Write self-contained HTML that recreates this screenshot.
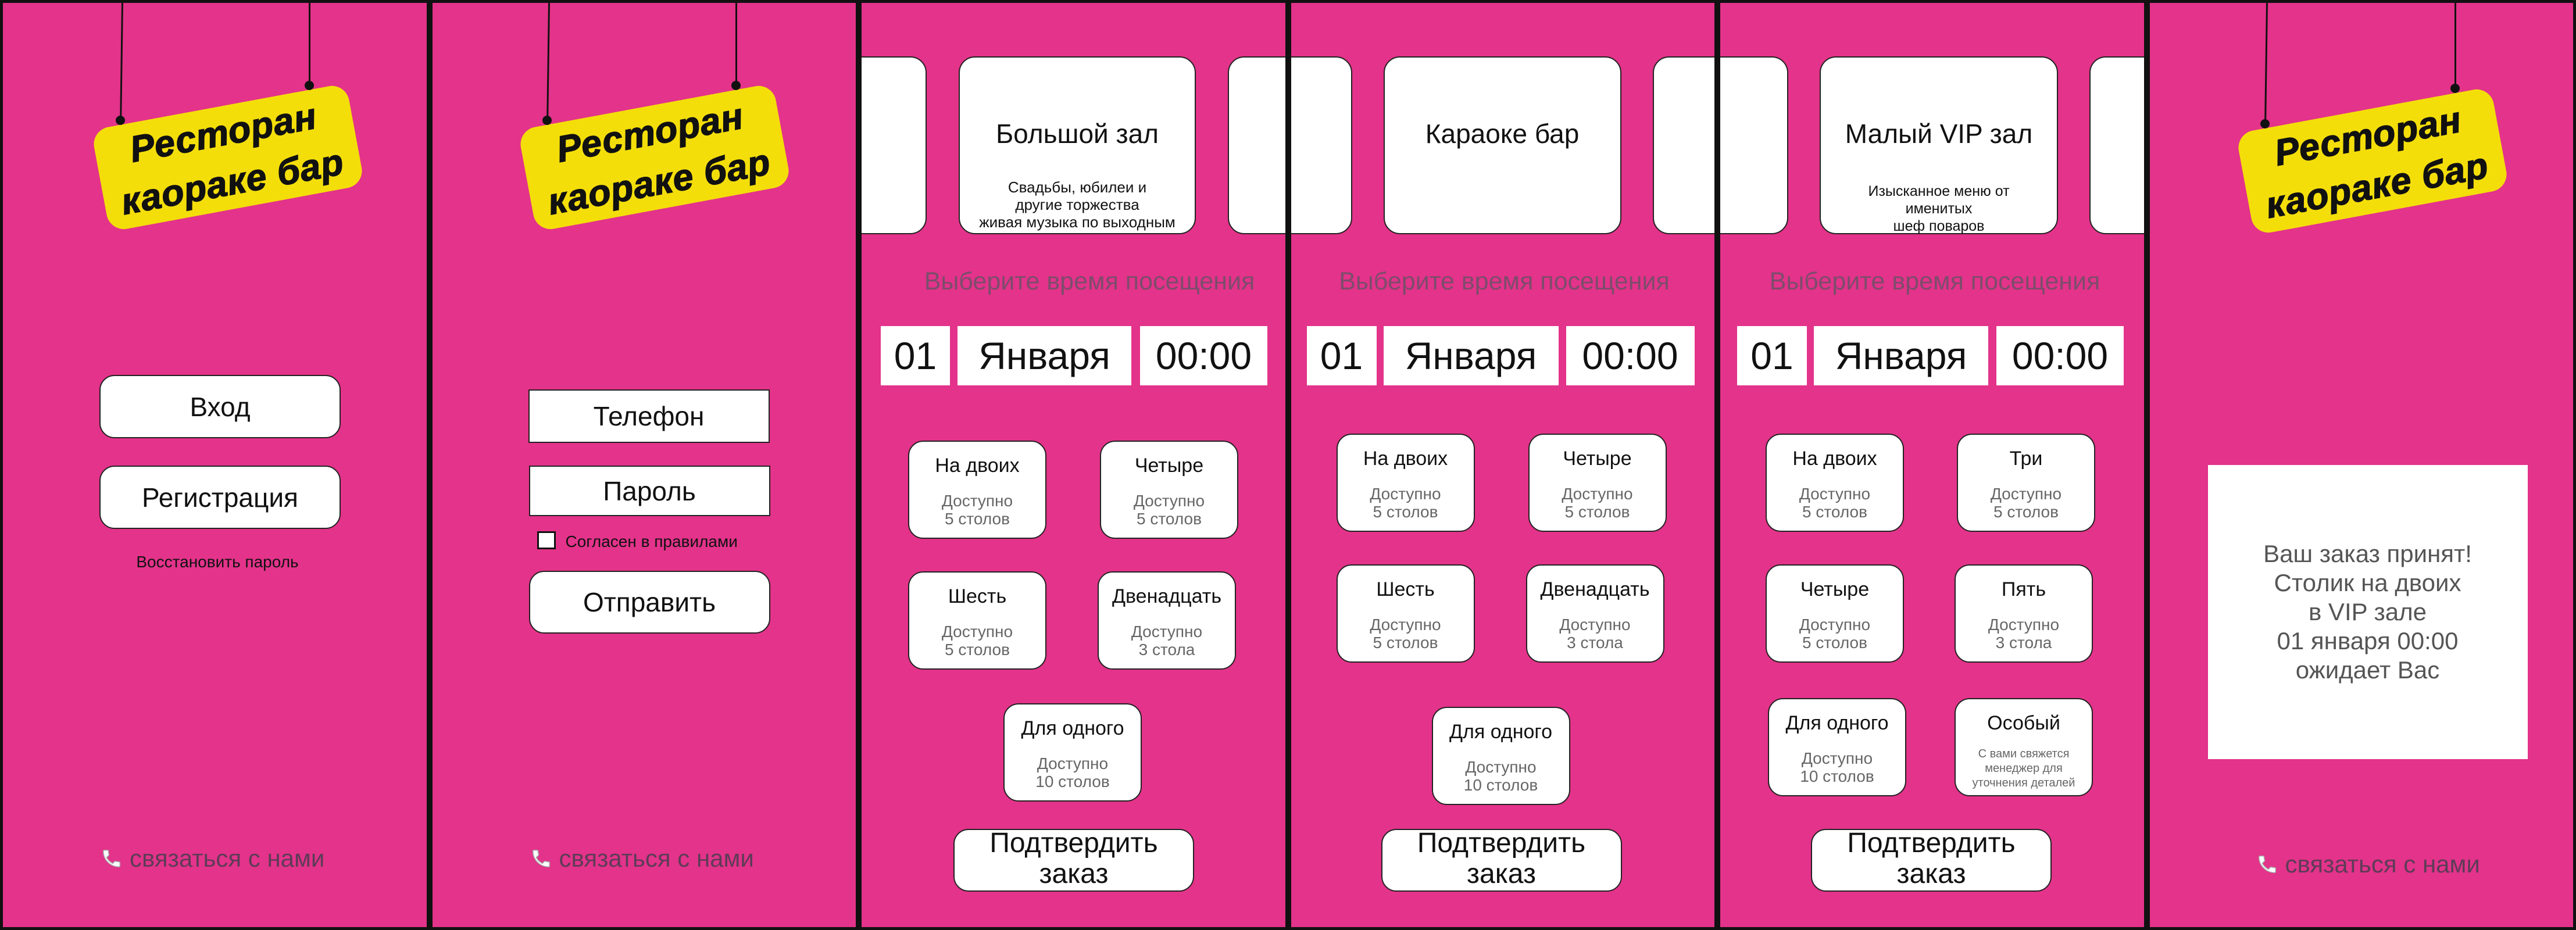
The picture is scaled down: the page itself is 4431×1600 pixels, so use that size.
<!DOCTYPE html>
<html><head><meta charset="utf-8">
<style>
*{margin:0;padding:0;box-sizing:border-box}
html,body{width:4431px;height:1600px;overflow:hidden;background:#000}
body{position:relative;font-family:"Liberation Sans","DejaVu Sans",sans-serif}
.p{position:absolute;top:0;height:1600px;width:738.5px;background:#E3338A;border:5px solid #111;overflow:hidden}
.a{position:absolute}
.btn{position:absolute;background:#fff;border:2.5px solid #222;border-radius:26px;display:flex;align-items:center;justify-content:center;font-size:46px;color:#111;text-align:center}
.inp{position:absolute;background:#fff;border:2.5px solid #222;display:flex;align-items:center;justify-content:center;font-size:46px;color:#111}
.str{position:absolute;width:3px;background:#111;transform-origin:top center}
.dot{position:absolute;width:16px;height:16px;border-radius:50%;background:#111}
.sign{position:absolute;width:446px;height:178px;background:#F4DE0A;border-radius:30px;transform:rotate(-10.5deg);display:flex;flex-direction:column;align-items:center;justify-content:center;font-weight:bold;font-style:italic;font-size:63px;line-height:86px;color:#111;letter-spacing:1px;-webkit-text-stroke:1.5px #111}
.contact{position:absolute;font-size:42px;color:#5f3b58;display:flex;align-items:center}
.hall{position:absolute;top:92px;height:306px;background:#fff;border:2.5px solid #222;border-radius:28px}
.hall .t{position:absolute;left:0;right:0;top:104px;text-align:center;font-size:46px;color:#111}
.hall .s{position:absolute;left:0;right:0;top:208px;text-align:center;font-size:26px;line-height:30px;color:#111}
.choose{position:absolute;top:455px;width:700px;text-align:center;font-size:43px;color:#7d4c6c}
.date{position:absolute;top:556px;height:102px;background:#fff;display:flex;align-items:center;justify-content:center;font-size:66px;color:#111}
.tb{position:absolute;background:#fff;border:2.5px solid #222;border-radius:26px;width:238px;height:169px;text-align:center}
.tb .t{position:absolute;left:0;right:0;top:22px;font-size:34px;color:#111;white-space:nowrap}
.tb .s{position:absolute;left:0;right:0;top:86px;font-size:28px;line-height:31px;color:#666}
.tb .s2{position:absolute;left:0;right:0;top:82px;font-size:20px;line-height:25px;color:#666}
.conf{position:absolute;top:1421px;height:108px;width:414px;background:#fff;border:2.5px solid #222;border-radius:26px;text-align:center;font-size:48px;line-height:53px;color:#111;overflow:visible}
.conf span{position:absolute;left:0;right:0;top:-4px}
</style></head><body>

<!-- Panel 1 -->
<div class="p" style="left:0">
  <div class="str" style="left:204px;top:0;height:201px;transform:rotate(0.8deg)"></div>
  <div class="str" style="left:526px;top:0;height:142px"></div>
  <div class="sign" style="left:164px;top:177px"><div>Ресторан</div><div>каораке бар</div></div>
  <div class="dot" style="left:194px;top:194px"></div>
  <div class="dot" style="left:519px;top:134px"></div>
  <div class="btn" style="left:166px;top:640px;width:415px;height:109px">Вход</div>
  <div class="btn" style="left:166px;top:796px;width:415px;height:109px">Регистрация</div>
  <div class="a" style="left:0;width:738px;top:946px;text-align:center;font-size:28px;color:#111">Восстановить пароль</div>
  <div class="contact" style="left:168px;top:1448px">
    <svg width="38" height="38" viewBox="0 0 24 24"><path d="M6.6 10.8c1.4 2.8 3.8 5.1 6.6 6.6l2.2-2.2c.3-.3.7-.4 1-.2 1.1.4 2.300.6 3.6.6.6 0 1 .4 1 1V20c0 .6-.4 1-1 1C10.6 21 3 13.4 3 4c0-.6.4-1 1-1h3.5c.6 0 1 .4 1 1 0 1.3.2 2.5.6 3.6.1.3 0 .7-.2 1z" fill="#fff" stroke="#aaa" stroke-width="1"/></svg>
    <span style="margin-left:12px">связаться с нами</span></div>
</div>

<!-- Panel 2 -->
<div class="p" style="left:738.5px">
  <div class="str" style="left:199px;top:0;height:201px;transform:rotate(0.8deg)"></div>
  <div class="str" style="left:521px;top:0;height:142px"></div>
  <div class="sign" style="left:159px;top:177px"><div>Ресторан</div><div>каораке бар</div></div>
  <div class="dot" style="left:189px;top:194px"></div>
  <div class="dot" style="left:514px;top:134px"></div>
  <div class="inp" style="left:165px;top:665px;width:415px;height:92px">Телефон</div>
  <div class="inp" style="left:166px;top:796px;width:415px;height:87px">Пароль</div>
  <div class="a" style="left:180px;top:909px;width:32px;height:31px;background:#fff;border:3px solid #111"></div>
  <div class="a" style="left:229px;top:911px;font-size:28px;color:#111">Согласен в правилами</div>
  <div class="btn" style="left:166px;top:977px;width:415px;height:108px">Отправить</div>
  <div class="contact" style="left:168px;top:1448px">
    <svg width="38" height="38" viewBox="0 0 24 24"><path d="M6.6 10.8c1.4 2.8 3.8 5.1 6.6 6.6l2.2-2.2c.3-.3.7-.4 1-.2 1.1.4 2.3.6 3.6.6.6 0 1 .4 1 1V20c0 .6-.4 1-1 1C10.6 21 3 13.4 3 4c0-.6.4-1 1-1h3.5c.6 0 1 .4 1 1 0 1.3.2 2.5.6 3.6.1.3 0 .7-.2 1z" fill="#fff" stroke="#aaa" stroke-width="1"/></svg>
    <span style="margin-left:12px">связаться с нами</span></div>
</div>

<!-- Panel 3 -->
<div class="p" style="left:1477px">
  <div class="hall" style="left:-30px;width:142px"></div>
  <div class="hall" style="left:167px;width:408px"><div class="t">Большой зал</div><div class="s">Свадьбы, юбилеи и<br>другие торжества<br>живая музыка по выходным</div></div>
  <div class="hall" style="left:630px;width:200px"></div>
  <div class="choose" style="left:42px">Выберите время посещения</div>
  <div class="date" style="left:33px;width:119px">01</div>
  <div class="date" style="left:165px;width:299px">Января</div>
  <div class="date" style="left:479px;width:219px">00:00</div>
  <div class="tb" style="left:80px;top:753px"><div class="t">На двоих</div><div class="s">Доступно<br>5 столов</div></div>
  <div class="tb" style="left:410px;top:753px"><div class="t">Четыре</div><div class="s">Доступно<br>5 столов</div></div>
  <div class="tb" style="left:80px;top:978px"><div class="t">Шесть</div><div class="s">Доступно<br>5 столов</div></div>
  <div class="tb" style="left:406px;top:978px"><div class="t">Двенадцать</div><div class="s">Доступно<br>3 стола</div></div>
  <div class="tb" style="left:244px;top:1205px"><div class="t">Для одного</div><div class="s">Доступно<br>10 столов</div></div>
  <div class="conf" style="left:158px"><span>Подтвердить<br>заказ</span></div>
</div>

<!-- Panel 4 -->
<div class="p" style="left:2215.5px">
  <div class="hall" style="left:-30px;width:135px"></div>
  <div class="hall" style="left:159px;width:409px"><div class="t">Караоке бар</div></div>
  <div class="hall" style="left:622px;width:200px"></div>
  <div class="choose" style="left:17px">Выберите время посещения</div>
  <div class="date" style="left:27px;width:120px">01</div>
  <div class="date" style="left:159px;width:301px">Января</div>
  <div class="date" style="left:473px;width:221px">00:00</div>
  <div class="tb" style="left:78px;top:741px"><div class="t">На двоих</div><div class="s">Доступно<br>5 столов</div></div>
  <div class="tb" style="left:408px;top:741px"><div class="t">Четыре</div><div class="s">Доступно<br>5 столов</div></div>
  <div class="tb" style="left:78px;top:966px"><div class="t">Шесть</div><div class="s">Доступно<br>5 столов</div></div>
  <div class="tb" style="left:404px;top:966px"><div class="t">Двенадцать</div><div class="s">Доступно<br>3 стола</div></div>
  <div class="tb" style="left:242px;top:1211px"><div class="t">Для одного</div><div class="s">Доступно<br>10 столов</div></div>
  <div class="conf" style="left:155px"><span>Подтвердить<br>заказ</span></div>
</div>

<!-- Panel 5 -->
<div class="p" style="left:2954px">
  <div class="hall" style="left:-30px;width:147px"></div>
  <div class="hall" style="left:171px;width:410px"><div class="t">Малый VIP зал</div><div class="s" style="top:215px;font-size:25px">Изысканное меню от<br>именитых<br>шеф поваров</div></div>
  <div class="hall" style="left:635px;width:200px"></div>
  <div class="choose" style="left:19px">Выберите время посещения</div>
  <div class="date" style="left:29px;width:120px">01</div>
  <div class="date" style="left:161px;width:300px">Января</div>
  <div class="date" style="left:475px;width:219px">00:00</div>
  <div class="tb" style="left:78px;top:741px"><div class="t">На двоих</div><div class="s">Доступно<br>5 столов</div></div>
  <div class="tb" style="left:407px;top:741px"><div class="t">Три</div><div class="s">Доступно<br>5 столов</div></div>
  <div class="tb" style="left:78px;top:966px"><div class="t">Четыре</div><div class="s">Доступно<br>5 столов</div></div>
  <div class="tb" style="left:403px;top:966px"><div class="t">Пять</div><div class="s">Доступно<br>3 стола</div></div>
  <div class="tb" style="left:82px;top:1196px"><div class="t">Для одного</div><div class="s">Доступно<br>10 столов</div></div>
  <div class="tb" style="left:403px;top:1196px"><div class="t">Особый</div><div class="s2">С вами свяжется<br>менеджер для<br>уточнения деталей</div></div>
  <div class="conf" style="left:156px"><span>Подтвердить<br>заказ</span></div>
</div>

<!-- Panel 6 -->
<div class="p" style="left:3692.5px">
  <div class="str" style="left:200px;top:0;height:207px;transform:rotate(0.8deg)"></div>
  <div class="str" style="left:524px;top:0;height:147px"></div>
  <div class="sign" style="left:160px;top:183px"><div>Ресторан</div><div>каораке бар</div></div>
  <div class="dot" style="left:190px;top:200px"></div>
  <div class="dot" style="left:517px;top:139px"></div>
  <div class="a" style="left:100px;top:795px;width:550px;height:506px;background:#fff;display:flex;align-items:center;justify-content:center;text-align:center;font-size:42px;line-height:50px;color:#555">
    <div>Ваш заказ принят!<br>Столик на двоих<br>в VIP зале<br>01 января 00:00<br>ожидает Вас</div></div>
  <div class="contact" style="left:183px;top:1458px">
    <svg width="38" height="38" viewBox="0 0 24 24"><path d="M6.6 10.8c1.4 2.8 3.8 5.1 6.6 6.6l2.2-2.2c.3-.3.7-.4 1-.2 1.1.4 2.3.6 3.6.6.6 0 1 .4 1 1V20c0 .6-.4 1-1 1C10.6 21 3 13.4 3 4c0-.6.4-1 1-1h3.5c.6 0 1 .4 1 1 0 1.3.2 2.5.6 3.6.1.3 0 .7-.2 1z" fill="#fff" stroke="#aaa" stroke-width="1"/></svg>
    <span style="margin-left:12px">связаться с нами</span></div>
</div>

</body></html>
